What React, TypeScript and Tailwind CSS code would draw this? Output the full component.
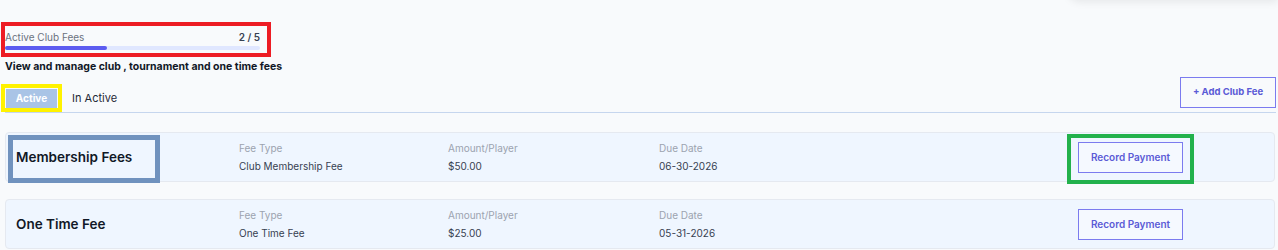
import React from "react";

type Fee = {
	name: string;
	feeType: string;
	amount: string;
	dueDate: string;
};

const fees: Fee[] = [
	{
		name: "Membership Fees",
		feeType: "Club Membership Fee",
		amount: "$50.00",
		dueDate: "06-30-2026",
	},
	{
		name: "One Time Fee",
		feeType: "One Time Fee",
		amount: "$25.00",
		dueDate: "05-31-2026",
	},
];

function FeeCard({ fee }: { fee: Fee }) {
	return (
		<div className="flex items-center h-[50px] bg-[#eff6ff] border border-[#e5e9f0] rounded-[4px] pl-[10px]">
			<div className="w-[223px] text-[13.5px] font-semibold text-[#111827]">
				{fee.name}
			</div>
			<div className="w-[209px] flex flex-col gap-[4px]">
				<span className="text-[10px] leading-[14px] text-[#9ca3af]">Fee Type</span>
				<span className="text-[10px] leading-[14px] text-[#374151]">{fee.feeType}</span>
			</div>
			<div className="w-[211px] flex flex-col gap-[4px]">
				<span className="text-[10px] leading-[14px] text-[#9ca3af]">Amount/Player</span>
				<span className="text-[10px] leading-[14px] text-[#374151]">{fee.amount}</span>
			</div>
			<div className="w-[419px] flex flex-col gap-[4px]">
				<span className="text-[10px] leading-[14px] text-[#9ca3af]">Due Date</span>
				<span className="text-[10px] leading-[14px] text-[#374151]">{fee.dueDate}</span>
			</div>
			<button
				type="button"
				className="w-[105px] h-[31px] border border-[#7b7bef] text-[10px] font-semibold text-[#5b5bd6] bg-white/40"
			>
				Record Payment
			</button>
		</div>
	);
}

export default function App() {
	return (
		<main
			className="relative w-[1278px] h-[250px] overflow-hidden bg-[#f8fafc]"
			style={{ fontFamily: "Inter, 'Noto Sans', sans-serif" }}
		>
			{/* header shadow top right */}
			<div className="absolute right-0 top-[-30px] w-[210px] h-[30px] bg-white shadow-[0_2px_8px_rgba(0,0,0,0.08)] rounded-bl-xl" />

			<div className="pl-[5px] pr-[2px] pt-[30px]">
				{/* progress */}
				<div className="w-[255px]">
					<div className="flex justify-between items-center h-[14px]">
						<span className="text-[10px] text-[#6b7280]">Active Club Fees</span>
						<span className="text-[10px] font-semibold text-[#374151]">2 / 5</span>
					</div>
					<div className="mt-[2px] h-[4px] rounded-full bg-[#e0e7ff]">
						<div className="h-full w-[40%] rounded-full bg-[#5c5cf0]" />
					</div>
				</div>

				<p className="mt-[10px] text-[10.5px] leading-[14px] font-bold text-[#111827]">
					View and manage club , tournament and one time fees
				</p>

				{/* tabs */}
				<div className="mt-[3px] flex justify-between items-end border-b border-[#c6d6ee] pb-[4px]">
					<div className="flex items-center pl-[1px]">
						<button
							type="button"
							className="w-[51px] h-[19px] bg-[#a9c4e6] text-white text-[10px] font-bold"
						>
							Active
						</button>
						<button type="button" className="ml-[15px] text-[11px] text-[#1f2937]">
							In Active
						</button>
					</div>
					<button
						type="button"
						className="w-[96px] h-[31px] border border-[#7b7bef] text-[9.5px] font-bold text-[#5b5bd6]"
					>
						+ Add Club Fee
					</button>
				</div>

				{/* cards */}
				<div className="mt-[19px] flex flex-col gap-[17px] mr-[1px]">
					{fees.map((f) => (
						<FeeCard key={f.name} fee={f} />
					))}
				</div>
			</div>

			{/* annotation boxes */}
			<div className="absolute left-[1px] top-[22px] w-[270px] h-[35px] border-[4px] border-[#ed1c24]" />
			<div className="absolute left-[1px] top-[84px] w-[61px] h-[28px] border-[4px] border-[#fff200]" />
			<div className="absolute left-[8px] top-[135px] w-[152px] h-[48px] border-[5px] border-[#7092be]" />
			<div className="absolute left-[1067px] top-[134px] w-[127px] h-[50px] border-[4px] border-[#22b14c]" />
		</main>
	);
}
